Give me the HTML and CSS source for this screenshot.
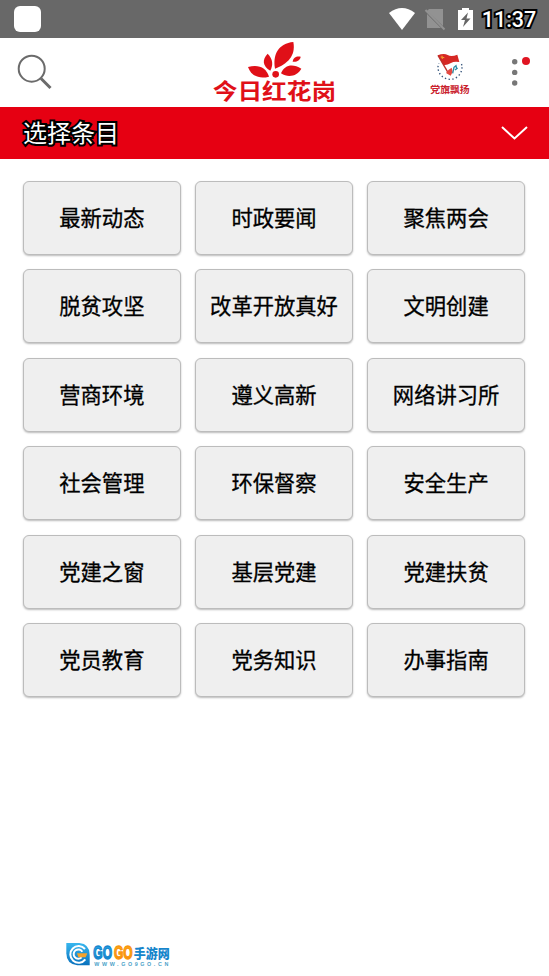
FILE: index.html
```html
<!DOCTYPE html>
<html lang="zh-CN">
<head>
<meta charset="utf-8">
<title>今日红花岗</title>
<link rel="stylesheet" href="styles.css">
</head>
<body>
<div class="status">
  <span class="app-dot"></span>
  <svg class="status-icons" viewBox="0 0 90 38" width="90" height="38">
    <path d="M3 13Q16 3 29 13L16 30Z" fill="#fff"/>
    <path d="M43 9H57V26L41 11ZM41 14L55 28H41Z" fill="#929292"/>
    <path d="M39.500 10L58.500 29.500" stroke="#929292" stroke-width="2"/>
    <path d="M72 10H76V8H83V10H87V30H72Z" fill="#fff"/>
    <path d="M82 12.500L75 20H79L77 27L84.500 18.500H80.500Z" fill="#666"/>
  </svg>
  <span class="clock">11:37</span>
</div>
<header class="header">
  <svg class="search" viewBox="0 0 40 40" width="40" height="40" fill="none" stroke="#6b6b6b">
    <circle cx="16.700" cy="15.700" r="13" stroke-width="2"/>
    <path d="M26 25.500L35.500 35" stroke-width="3"/>
  </svg>
  <svg class="logo" viewBox="0 6 450 204" width="150" height="68" fill="#e01018">
    <path d="M225 98C217 55 236 22 280 18C288 60 262 84 225 98Z"/>
    <path d="M211 104C187 90 186 70 203 53C219 70 220 86 211 104Z"/>
    <path d="M207 122C176 130 153 119 144 93C177 84 199 96 207 122Z"/>
    <path d="M243 112C254 87 277 82 304 98C293 119 266 127 243 112Z"/>
    <path d="M278 77C280 64 289 60 302 62C300 73 290 79 278 77Z"/>
    <circle cx="227" cy="115" r="10"/>
    <text class="logo-text" x="38" y="190" textLength="371" lengthAdjust="spacingAndGlyphs">今日红花岗</text>
  </svg>
  <svg class="party" viewBox="0 0 134 180" width="44.667" height="60">
    <circle cx="72" cy="82" r="36" fill="none" stroke="#36557c" stroke-width="4" stroke-dasharray="4 7" pathLength="220" clip-path="url(#ring)"/>
    <clipPath id="ring"><path d="M20 70H125V125H20Z"/></clipPath>
    <path d="M35 46Q54 39 65 45T94 44L100 66Q84 63 75 69T53 76Z" fill="#d62824"/>
    <path d="M36 46L68 101" stroke="#bd302b" stroke-width="4"/>
    <path d="M68 89L77 83L80 96L74 107L60 99Z" fill="#e54942"/>
    <path d="M80 100L84 82L90 77L92 86M87 90L95 84" fill="none" stroke="#2f8ba5" stroke-width="4"/>
    <path d="M44 51L55 53M48 47L49 57" stroke="#f2a52c" stroke-width="3"/>
    <text class="party-text" x="13" y="159" textLength="118" lengthAdjust="spacingAndGlyphs">党旗飘扬</text>
  </svg>
  <svg class="more" viewBox="0 0 24 36" width="24" height="36">
    <g fill="#777"><circle cx="5.700" cy="8.800" r="2.700"/><circle cx="5.700" cy="19.400" r="2.700"/><circle cx="5.700" cy="30" r="2.700"/></g>
    <circle cx="17" cy="8" r="4" fill="#e01522"/>
  </svg>
</header>
<div class="picker">
  <h1 class="picker-title">选择条目</h1>
  <svg viewBox="0 0 28 16" width="28" height="16" fill="none" stroke="#fff" stroke-width="2"><path d="M2 2L14.500 13.500L27 2"/></svg>
</div>
<main class="grid">
  <button class="item">最新动态</button><button class="item">时政要闻</button><button class="item">聚焦两会</button>
  <button class="item">脱贫攻坚</button><button class="item">改革开放真好</button><button class="item">文明创建</button>
  <button class="item">营商环境</button><button class="item">遵义高新</button><button class="item">网络讲习所</button>
  <button class="item">社会管理</button><button class="item">环保督察</button><button class="item">安全生产</button>
  <button class="item">党建之窗</button><button class="item">基层党建</button><button class="item">党建扶贫</button>
  <button class="item">党员教育</button><button class="item">党务知识</button><button class="item">办事指南</button>
</main>
<footer class="footer">
  <svg viewBox="0 0 390 138" width="130" height="46">
    <defs>
      <linearGradient id="blue" x1="0" y1="0" x2="0" y2="1"><stop offset="0" stop-color="#38b7ef"/><stop offset="1" stop-color="#0870bd"/></linearGradient>
      <linearGradient id="orange" x1="0" y1="0" x2="0" y2="1"><stop offset="0" stop-color="#ffb51c"/><stop offset="1" stop-color="#f47d08"/></linearGradient>
    </defs>
    <path d="M34 39H73Q104 42 104 74V106H67Q34 102 34 70Z" fill="url(#blue)"/>
    <path d="M90 57A25 25 0 1 0 91 88M82 65A14 14 0 1 0 80 82" fill="none" stroke="#fff" stroke-width="6"/>
    <path d="M66 70H97L92 82H70Z" fill="#f5a22b"/>
    <text class="gogo" x="115" y="88" textLength="56" lengthAdjust="spacingAndGlyphs" fill="url(#blue)" stroke="#1688cf">GO</text>
    <text class="gogo" x="177" y="88" textLength="56" lengthAdjust="spacingAndGlyphs" fill="url(#orange)" stroke="#f9960f">GO</text>
    <text class="gogo-cn" x="236" y="85" textLength="108" lengthAdjust="spacingAndGlyphs">手游网</text>
    <text class="gogo-url" x="118" y="107" textLength="222">WWW.GO9GO.CN</text>
  </svg>
</footer>
</body>
</html>
```
FILE: styles.css
```css
* { box-sizing: border-box; }
body {
  margin: 0;
  height: 976px;
  display: flex;
  flex-direction: column;
  background: #fff;
  font-family: "Noto Sans CJK SC", sans-serif;
  overflow: hidden;
}
.status {
  height: 38px;
  flex: none;
  display: flex;
  align-items: center;
  padding: 0 11px 0 14px;
  background: #686868;
}
.app-dot {
  width: 27px;
  height: 26px;
  border-radius: 6px;
  background: #fff;
}
.status-icons { margin: 0 1px 0 auto; }
.clock {
  width: 58px;
  margin-left: 3px;
  padding-top: 2px;
  text-align: center;
  color: #fff;
  font: 500 21.5px/30px Roboto, sans-serif;
  -webkit-text-stroke: 4px #000;
  paint-order: stroke fill;
}
.header {
  height: 69px;
  flex: none;
  display: flex;
  align-items: flex-start;
}
.search { margin: 15px 0 0 15px; }
.logo { margin-left: 145px; }
.logo-text { font: 700 64px "Noto Sans CJK SC", sans-serif; }
.party { margin: 2px 0 0 76px; }
.party-text {
  font: 700 28px "Noto Sans CJK SC", sans-serif;
  fill: #c9202c;
}
.more { margin: 15px 0 0 38px; }
.picker {
  height: 52px;
  flex: none;
  display: flex;
  align-items: center;
  justify-content: space-between;
  padding: 0 21px 0 23px;
  background: #e60012;
}
.picker-title {
  margin: 0;
  padding-bottom: 2px;
  color: #fff;
  font-size: 24px;
  line-height: 36px;
  font-weight: 400;
  -webkit-text-stroke: 4px #000;
  paint-order: stroke fill;
}
.grid {
  display: grid;
  grid-template-columns: repeat(3, 1fr);
  grid-auto-rows: 74px;
  gap: 14.4px;
  padding: 22px 24px 0 23px;
}
.item {
  padding: 0 0 2px;
  border: 1px solid #bcbcbc;
  border-radius: 6px;
  background: #efefef;
  box-shadow: 0 1px 2px #bbb;
  color: #000;
  font: 400 21.300px/32px "Noto Sans CJK SC", sans-serif;
  -webkit-text-stroke: 0.3px #000;
  white-space: nowrap;
}
.footer {
  height: 46px;
  margin: auto 0 0 55px;
}
.footer svg { display: block; }
.gogo {
  font: 700 54px "Liberation Sans", sans-serif;
  stroke-width: 4px;
}
.gogo-cn { font: 900 38px "Noto Sans CJK SC", sans-serif; fill: #1685cb; }
.gogo-url { font: 700 16px "Liberation Sans", sans-serif; fill: #4b9fc8; }
```
